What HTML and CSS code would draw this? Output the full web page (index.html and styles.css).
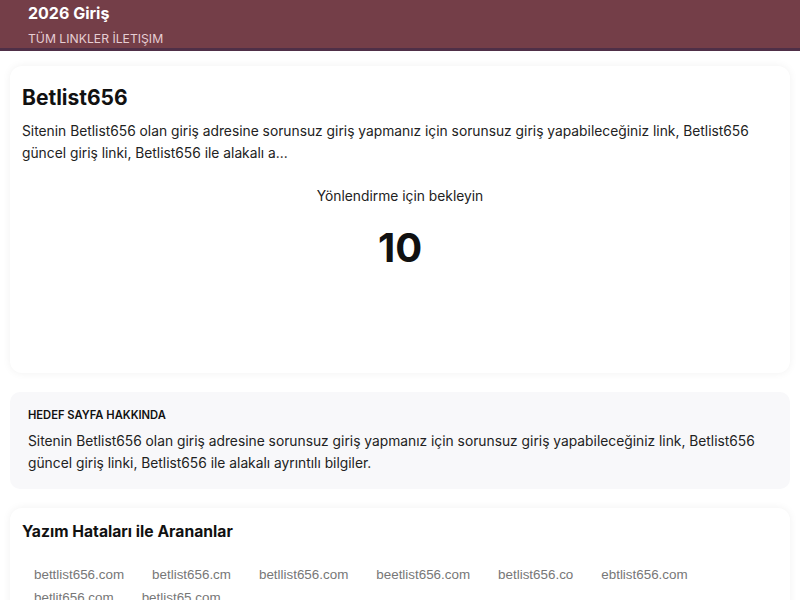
FILE: index.html
```html
<!DOCTYPE html>
<html lang="tr">
<head>
<meta charset="utf-8">
<title>2026 Giriş</title>
<link rel="stylesheet" href="styles.css">
</head>
<body>
<header class="topbar">
  <div class="brand">2026 Giriş</div>
  <nav class="nav"><a href="#">TÜM LINKLER</a> <a href="#">İLETIŞIM</a></nav>
</header>
<main class="main">
  <section class="card hero">
    <h1 class="title">Betlist656</h1>
    <p class="desc">Sitenin Betlist656 olan giriş adresine sorunsuz giriş yapmanız için sorunsuz giriş yapabileceğiniz link, Betlist656 güncel giriş linki, Betlist656 ile alakalı a...</p>
    <p class="wait">Yönlendirme için bekleyin</p>
    <div class="count">10</div>
  </section>
  <section class="about">
    <h2 class="about-title">HEDEF SAYFA HAKKINDA</h2>
    <p class="about-text">Sitenin Betlist656 olan giriş adresine sorunsuz giriş yapmanız için sorunsuz giriş yapabileceğiniz link, Betlist656 güncel giriş linki, Betlist656 ile alakalı ayrıntılı bilgiler.</p>
  </section>
  <section class="card typos">
    <h2 class="typos-title">Yazım Hataları ile Arananlar</h2>
    <div class="tags">
      <span class="tag">bettlist656.com</span>
      <span class="tag">betlist656.cm</span>
      <span class="tag">betllist656.com</span>
      <span class="tag">beetlist656.com</span>
      <span class="tag">betlist656.co</span>
      <span class="tag">ebtlist656.com</span>
      <span class="tag">betlit656.com</span>
      <span class="tag">betlist65.com</span>
    </div>
  </section>
</main>
</body>
</html>
```

FILE: styles.css
```css
* { box-sizing: border-box; }
html, body { margin: 0; padding: 0; }
body {
  font-family: Inter, "Noto Sans", "Liberation Sans", sans-serif;
  color: #111;
  background: #fff;
}
.topbar {
  background: #743e48;
  border-bottom: 3px solid #4f2f47;
  height: 51px;
  padding: 4px 28px 0;
}
.brand {
  color: #fff;
  font-weight: 700;
  font-size: 16px;
  line-height: 18px;
}
.nav {
  margin-top: 9px;
  font-size: 12.2px;
  line-height: 16px;
  color: #e6cdd3;
}
.nav a { color: inherit; text-decoration: none; }
.main { padding: 15px 10px 0; }
.card {
  background: #fff;
  border-radius: 12px;
  box-shadow: 0 0 8px rgba(0,0,0,0.06);
}
.hero {
  padding: 16px 12px 101px;
}
.title {
  margin: 0;
  font-size: 21px;
  line-height: 32px;
  font-weight: 700;
}
.desc {
  margin: 6px 0 0;
  font-size: 13.8px;
  line-height: 22px;
  color: #222;
}
.wait {
  margin: 21px 0 0;
  text-align: center;
  font-size: 13.8px;
  line-height: 22px;
  color: #222;
}
.count {
  margin-top: 17px;
  text-align: center;
  font-size: 40px;
  line-height: 48px;
  font-weight: 700;
}
.about {
  margin-top: 19px;
  background: #f8f8fa;
  border-radius: 10px;
  padding: 15px 18px 15px;
}
.about-title {
  margin: 0;
  font-size: 11.2px;
  line-height: 16px;
  font-weight: 600;
  color: #111;
}
.about-text {
  margin: 7px 0 0;
  font-size: 13.8px;
  line-height: 22px;
  color: #222;
}
.typos {
  margin-top: 19px;
  padding: 12px 12px 10px;
}
.typos-title {
  margin: 0;
  font-size: 15.7px;
  line-height: 24px;
  font-weight: 700;
}
.tags {
  margin-top: 21px;
  display: flex;
  flex-wrap: wrap;
  column-gap: 4px;
  row-gap: 0;
}
.tag {
  font-family: "Liberation Sans", Arial, sans-serif;
  font-size: 13.4px;
  line-height: 16px;
  padding: 2px 12px 5px;
  color: #777;
}
```
